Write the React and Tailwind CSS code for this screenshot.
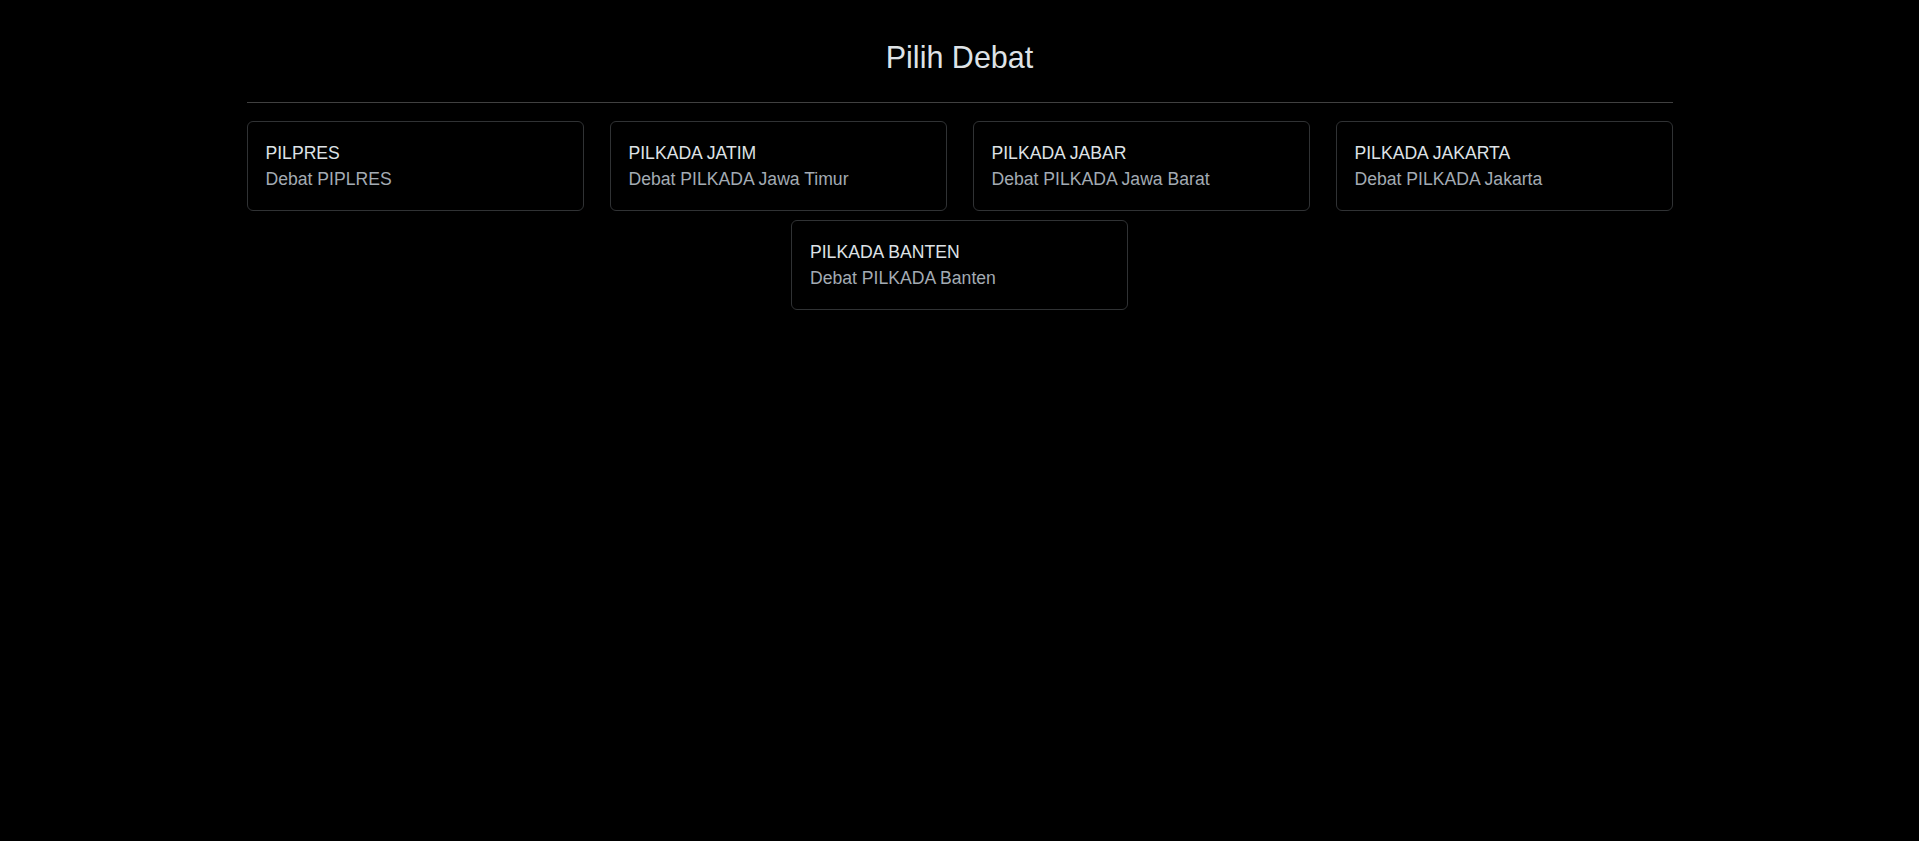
import React from "react";

const debates = [
    { id: "pilpres", title: "PILPRES", desc: "Debat PIPLRES" },
    { id: "jatim", title: "PILKADA JATIM", desc: "Debat PILKADA Jawa Timur" },
    { id: "jabar", title: "PILKADA JABAR", desc: "Debat PILKADA Jawa Barat" },
    { id: "jakarta", title: "PILKADA JAKARTA", desc: "Debat PILKADA Jakarta" },
    { id: "banten", title: "PILKADA BANTEN", desc: "Debat PILKADA Banten" },
];

function App() {
    return (
        <div className="min-h-screen bg-black font-['Liberation_Sans',Arial,sans-serif]">
            <div className="w-[1426px] mx-auto">
                {/* Judul */}
                <h1 className="pt-[39px] text-center text-[30.5px] leading-[36px] text-[#dee2e6]">
                    Pilih Debat
                </h1>
                <hr className="mt-[27px] border-0 border-t border-[#404040]" />

                {/* Daftar debat */}
                <div className="mt-[18px] flex flex-wrap justify-center gap-x-[26px] gap-y-[9px]">
                    {debates.map((d) => (
                        <a
                            key={d.id}
                            href="#"
                            className="block w-[337px] rounded-md border border-[#303234] px-[18px] pt-[18px] pb-[17px] text-[17.6px] leading-[26.4px] hover:bg-[#111]"
                        >
                            <div className="text-[#dee2e6]">{d.title}</div>
                            <div className="text-[#a3abb3]">{d.desc}</div>
                        </a>
                    ))}
                </div>
            </div>
        </div>
    );
}

export default App;
